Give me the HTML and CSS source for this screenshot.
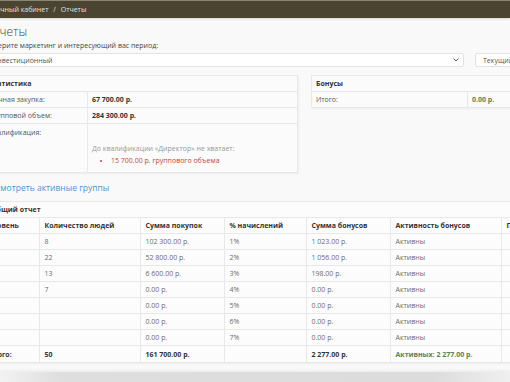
FILE: index.html
```html
<!DOCTYPE html>
<html lang="ru">
<head>
  <meta charset="UTF-8" />
  <meta name="viewport" content="width=device-width, initial-scale=1.0"/>
  <title>Отчеты</title>
  <link rel="stylesheet" href="styles.css">
</head>
<body>
  <div class="topbar">
    <div class="crumbs">Личный кабинет <span class="sep">/</span> Отчеты</div>
  </div>

  <div class="page">
    <h1 class="title">Отчеты</h1>
    <div class="hint">Выберите маркетинг и интересующий вас период:</div>

    <div class="filters">
      <div class="select select-wide">
        <span>Инвестиционный</span>
        <svg class="chevron" width="6" height="4" viewBox="0 0 6 4"><polyline points="0.5,0.5 3,3 5.5,0.5" fill="none" stroke="#555" stroke-width="1"/></svg>
      </div>
      <div class="select select-period">
        <span>Текущий месяц</span>
      </div>
    </div>

    <div class="cols">
      <div class="panel">
        <div class="panel-head">Статистика</div>
        <table class="grid stats">
          <tr><td class="c-label">Личная закупка:</td><td class="strong">67 700.00 р.</td></tr>
          <tr><td class="c-label">Групповой объем:</td><td class="strong">284 300.00 р.</td></tr>
          <tr class="qual">
            <td class="c-label">Квалификация:</td>
            <td>
              <div class="qual-note">До квалификации «Директор» не хватает:</div>
              <ul class="qual-list">
                <li>15 700.00 р. группового объема</li>
              </ul>
            </td>
          </tr>
        </table>
      </div>

      <div class="panel panel-short">
        <div class="panel-head">Бонусы</div>
        <table class="grid bonus">
          <tr><td class="c-half">Итого:</td><td class="green">0.00 р.</td></tr>
        </table>
      </div>
    </div>

    <a class="link" href="#">Посмотреть активные группы</a>

    <div class="panel report">
      <div class="panel-head">Общий отчет</div>
      <table class="grid report-table">
        <colgroup>
          <col class="w1"><col class="w2"><col class="w3"><col class="w4"><col class="w5"><col class="w6"><col class="w7">
        </colgroup>
        <tr class="head">
          <td>Уровень</td><td>Количество людей</td><td>Сумма покупок</td><td>% начислений</td><td>Сумма бонусов</td><td>Активность бонусов</td><td>Примечание</td>
        </tr>
        <tr><td>1</td><td>8</td><td>102 300.00 р.</td><td>1%</td><td>1 023.00 р.</td><td>Активны</td><td></td></tr>
        <tr><td>2</td><td>22</td><td>52 800.00 р.</td><td>2%</td><td>1 056.00 р.</td><td>Активны</td><td></td></tr>
        <tr><td>3</td><td>13</td><td>6 600.00 р.</td><td>3%</td><td>198.00 р.</td><td>Активны</td><td></td></tr>
        <tr><td>4</td><td>7</td><td>0.00 р.</td><td>4%</td><td>0.00 р.</td><td>Активны</td><td></td></tr>
        <tr><td>5</td><td></td><td>0.00 р.</td><td>5%</td><td>0.00 р.</td><td>Активны</td><td></td></tr>
        <tr><td>6</td><td></td><td>0.00 р.</td><td>6%</td><td>0.00 р.</td><td>Активны</td><td></td></tr>
        <tr><td>7</td><td></td><td>0.00 р.</td><td>7%</td><td>0.00 р.</td><td>Активны</td><td></td></tr>
        <tr class="total">
          <td>Итого:</td><td>50</td><td>161 700.00 р.</td><td></td><td>2 277.00 р.</td><td class="green">Активных: 2 277.00 р.</td><td></td>
        </tr>
      </table>
    </div>
  </div>

  <div class="footer"></div>
</body>
</html>
```

FILE: styles.css
```css
body {
  margin: 0;
  background-color: #f9f9f9;
  font-family: "Open Sans", "Liberation Sans", sans-serif;
  font-size: 7px;
  color: #555;
  overflow: hidden;
  width: 510px;
  height: 382px;
}

.topbar {
  height: 17px;
  background-color: #4b4431;
  border-top: 1px solid #8a8678;
  box-shadow: 0 1px 2px rgba(0,0,0,0.15);
}

.crumbs {
  margin-left: -9px;
  line-height: 17px;
  color: #e6e2d6;
  font-size: 7px;
  white-space: nowrap;
}

.sep {
  margin: 0 3px;
}

.page {
  margin-left: -16px;
  width: 641px;
  padding-top: 6px;
}

.title {
  margin: 0;
  font-size: 12px;
  font-weight: 300;
  line-height: 16px;
  color: #444;
  padding-left: 1px;
}

.hint {
  line-height: 10px;
  margin-top: 1px;
  color: #444;
}

.filters {
  display: flex;
  gap: 11px;
  margin-top: 2px;
}

.select {
  height: 12px;
  background-color: #fff;
  border: 1px solid #e3e3e3;
  border-radius: 2px;
  padding: 0 7px;
  display: flex;
  align-items: center;
  justify-content: space-between;
  color: #555;
}

.select-wide {
  width: 464px;
}

.select-period {
  flex: 1;
}

.chevron {
  margin-right: -3px;
}

.cols {
  display: flex;
  gap: 13px;
  align-items: flex-start;
  margin-top: 8px;
}

.panel {
  flex: 1;
  background-color: #fbfbfb;
  border: 1px solid #e8e8e8;
  box-shadow: 1px 1px 2px rgba(0,0,0,0.05);
}

.panel-head {
  height: 15px;
  line-height: 15px;
  padding: 0 4px;
  font-weight: bold;
  color: #333;
  border-bottom: 1px solid #e8e8e8;
}

.grid {
  width: 100%;
  border-collapse: collapse;
  table-layout: fixed;
}

.grid td {
  height: 15px;
  padding: 0 4px;
  border-top: 1px solid #e8e8e8;
  border-left: 1px solid #e8e8e8;
  white-space: nowrap;
  overflow: hidden;
}

.grid tr:first-child td {
  border-top: none;
}

.grid td:first-child {
  border-left: none;
}

.c-label {
  width: 94px;
}

.c-half {
  width: 147px;
}

.strong {
  font-weight: bold;
  color: #333;
}

.green {
  font-weight: bold;
  color: #5d8250;
}

.qual td {
  height: 44px;
  vertical-align: top;
}

.qual .c-label {
  padding-top: 4px;
}

.qual-note {
  margin-top: 20px;
  color: #999;
  line-height: 10px;
}

.qual-list {
  margin: 2px 0 0;
  padding-left: 19px;
  color: #c0463e;
  line-height: 10px;
}

.link {
  display: block;
  margin-top: 8px;
  font-size: 8.5px;
  line-height: 14px;
  color: #4f95cf;
  text-decoration: none;
  padding-left: 1px;
}

.report {
  margin-top: 6px;
  background-color: #fcfcfc;
}

.report .panel-head {
  padding-left: 6px;
}

.w1 { width: 54px; }
.w2 { width: 101px; }
.w3 { width: 84px; }
.w4 { width: 82px; }
.w5 { width: 84px; }
.w6 { width: 111px; }
.w7 { width: 125px; }

.report-table td {
  padding: 0 5px;
  color: #6b6b6b;
}

.report-table td:first-child {
  padding-left: 3px;
}

.report-table .head td,
.report-table .total td {
  font-weight: bold;
  color: #333;
}

.report-table .total td {
  height: 16px;
}

.report-table .total td.green {
  color: #5d8250;
}

.footer {
  margin-top: 9px;
  height: 12px;
  background: linear-gradient(to right, #f2f2f2 0%, #dedede 12%, #dcdcdc 85%, #f0f0f0 100%);
  box-shadow: 0 -1px 3px rgba(0,0,0,0.08);
}
```
